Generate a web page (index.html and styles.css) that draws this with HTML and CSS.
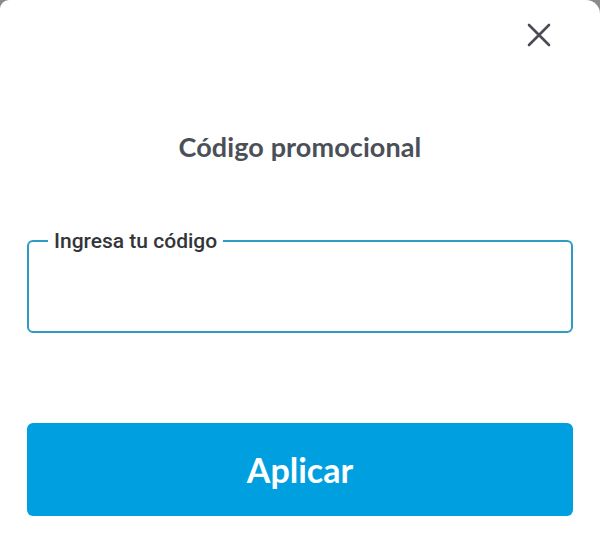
FILE: index.html
```html
<!DOCTYPE html>
<html lang="es">
<head>
<meta charset="utf-8">
<title>Código promocional</title>
<link rel="stylesheet" href="styles.css">
</head>
<body>
<div class="sheet">
  <div class="topbar">
    <button class="close" aria-label="Cerrar">
      <svg width="24" height="24" viewBox="0 0 24 24"><path d="M2 2 L22 22 M22 2 L2 22" stroke="#4a4b55" stroke-width="2.6" stroke-linecap="round" fill="none"/></svg>
    </button>
  </div>
  <h1 class="title">Código promocional</h1>
  <fieldset class="field">
    <legend class="label">Ingresa tu código</legend>
    <input class="input" type="text">
  </fieldset>
  <button class="apply">Aplicar</button>
</div>
</body>
</html>
```
FILE: styles.css
```css
html, body {
  margin: 0;
  padding: 0;
  background: #8a8a8a;
}
.sheet {
  width: 600px;
  height: 538px;
  background: #fff;
  border-top-left-radius: 9px;
  border-top-right-radius: 14px;
  box-sizing: border-box;
  padding: 0 27px;
  display: flex;
  flex-direction: column;
}
.topbar {
  display: flex;
  justify-content: flex-end;
  padding-top: 23px;
  margin-right: 22px;
}
.close {
  border: none;
  background: none;
  padding: 0;
  width: 24px;
  height: 24px;
  display: block;
  cursor: pointer;
}
.close svg { display: block; }
.title {
  margin: 84px 0 0;
  text-align: center;
  font-family: Lato, sans-serif;
  font-weight: 700;
  font-size: 27px;
  line-height: 32px;
  color: #4b5058;
  letter-spacing: 0.1px;
}
.field {
  margin: 66px 0 0;
  padding: 0;
  border: 2px solid #2e9cc2;
  border-radius: 6px;
  height: 104px;
  box-sizing: border-box;
  min-width: 0;
}
.label {
  margin-left: 19px;
  padding: 0 6px;
  font-family: Roboto, sans-serif;
  font-weight: 500;
  font-size: 21px;
  line-height: 24px;
  color: #333538;
}
.input {
  border: none;
  outline: none;
  width: 100%;
  box-sizing: border-box;
  height: 60px;
  background: transparent;
  font-family: Roboto, sans-serif;
  font-size: 18px;
  padding: 0 24px;
}
.apply {
  margin-top: 90px;
  height: 93px;
  border: none;
  border-radius: 6px;
  background: #009fdf;
  color: #fff;
  font-family: Lato, sans-serif;
  font-weight: 700;
  font-size: 34px;
  cursor: pointer;
}
```
